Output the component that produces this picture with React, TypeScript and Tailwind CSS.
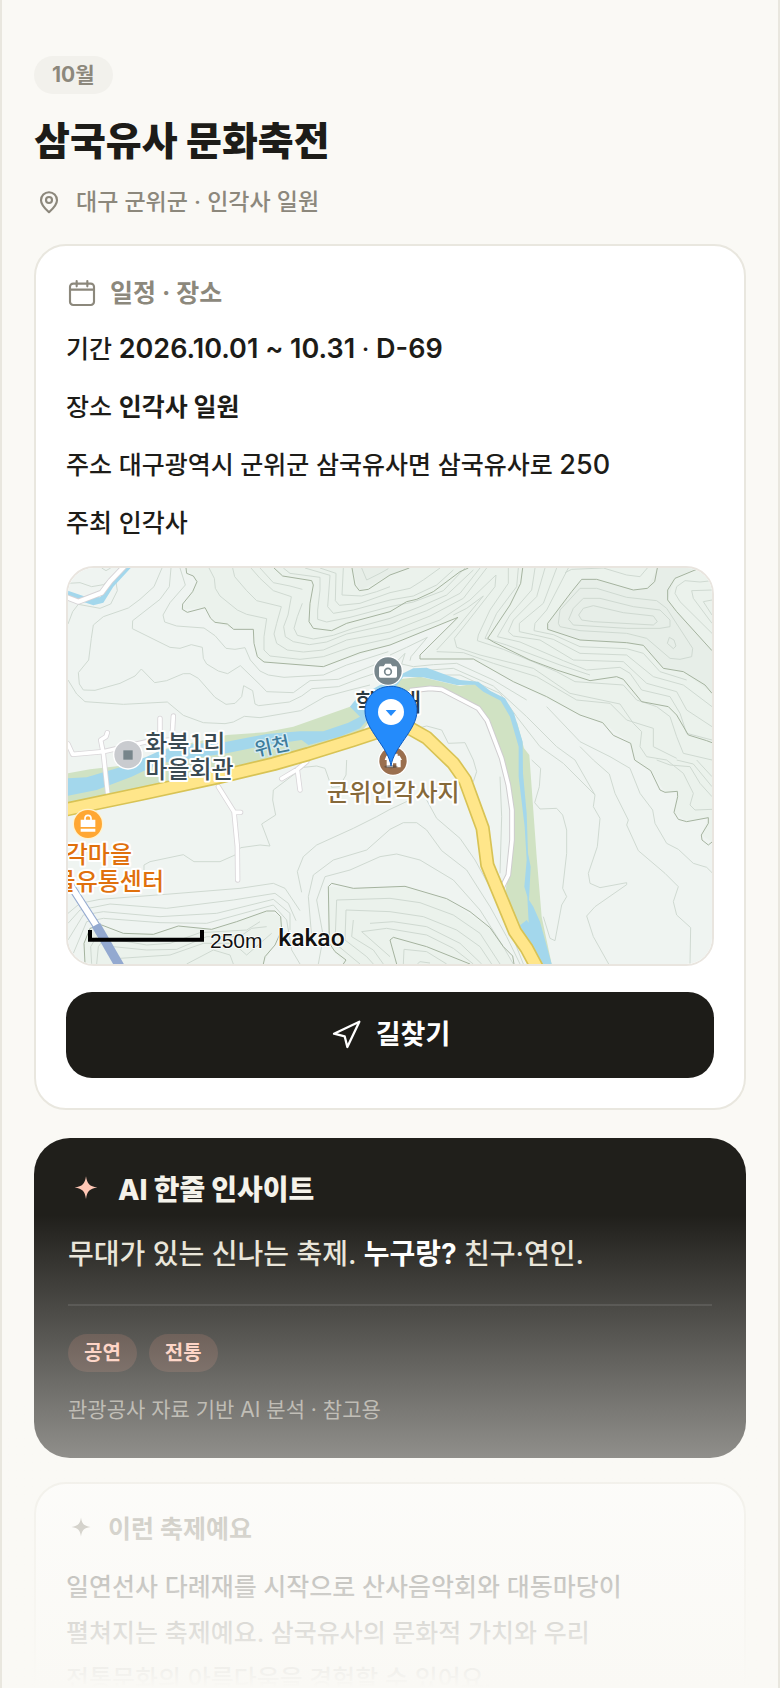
import type { ReactNode } from 'react'

const MAP_FONT = "font-['Noto_Sans_CJK_KR',sans-serif]"

const infoRows: { label: string; value: ReactNode }[] = [
  {
    label: '기간',
    value: (
      <>
        <b className="text-[27px] font-semibold">2026.10.01 ~ 10.31</b> · <b className="text-[27px] font-semibold">D-69</b>
      </>
    ),
  },
  { label: '장소', value: <b className="font-bold">인각사 일원</b> },
  {
    label: '주소',
    value: (
      <>
        대구광역시 군위군 삼국유사면 삼국유사로 <span className="text-[27px]">250</span>
      </>
    ),
  },
  { label: '주최', value: '인각사' },
]

const tags = ['공연', '전통']

// thin contour lines of the map
const contours = [
  'M24 70 L60 68 L95 80 L130 74 L160 50 L178 24',
  'M125 24 L138 32 L152 24',
  'M24 192 L38 155 L55 133 L120 145 L152 132 L172 92 L168 66',
  'M306 24 L282 80 L240 118 L205 144 L130 170 L100 195 L94 235 L86 300 L55 338 L58 372 L70 390 L105 391 L180 370 L225 348 L244 327 L284 368 L320 362 L370 341 L390 341 L415 355 L465 412 L498 433 L525 430 L545 410 L551 377 L578 392 L585 432 L596 437 L688 426 L725 408 L755 386 L835 380 L900 355 L960 335',
  'M24 360 L50 402 L75 425 L190 433 L322 426 L370 466 L430 488 L495 491 L520 486 L553 469 L600 473 L722 452 L795 410 L870 390 L930 375',
  'M333 24 L328 80 L300 118 L218 182 L217 206 L330 262 L360 265 L394 254 L427 262 L430 295 L440 312 L475 333 L503 341 L541 317 L570 345 L602 376 L620 395 L700 398 L750 362 L835 358 L985 298',
  'M360 24 L376 75 L330 128 L309 165 L314 186 L350 198 L432 204 L465 227 L498 265 L525 268 L555 263 L571 300 L600 333 L625 345 L672 352 L790 345 L860 315 L985 275',
  'M447 24 L463 55 L466 85 L480 108 L532 150 L560 163 L620 176 L612 230 L612 270 L630 288 L720 298 L790 290 L870 262 L990 235',
  'M518 24 L524 50 L560 92 L590 122 L664 140 L650 190 L642 222 L650 250 L682 270 L730 276 L790 270 L860 240 L990 216',
  'M573 24 L600 55 L640 92 L694 110 L684 165 L671 200 L676 230 L700 245 L748 254 L800 246 L860 222 L990 193',
  'M600 24 L640 68 L690 78 L727 88',
  'M727 130 L712 170 L702 205 L712 226 L760 237 L820 226 L880 205 L990 175',
  'M670 24 L690 40 L780 52 L780 90 L773 150 L773 178 L800 186 L870 172 L990 140',
  'M735 24 L810 46 L803 140 L820 160 L880 150 L990 120',
  'M780 24 L828 40 L826 122 L838 136 L900 130 L990 98',
  'M850 24 L846 105 L905 108 L950 95 L990 80',
  'M905 24 L920 60 L960 40 L985 26',
  'M990 98 L1050 85 L1090 60 L1140 24',
  'M990 120 L1060 108 L1130 75 L1180 30',
  'M990 140 L1060 126 L1150 92 L1215 24',
  'M990 175 L1080 140 L1160 105 L1240 30',
  'M990 193 L1100 152 L1200 100 L1260 24',
  'M990 216 L1110 168 L1210 115 L1280 24',
  'M990 235 L1140 180 L1230 120 L1308 45 L1305 80 L1215 195 L1183 235 L1190 262 L1260 285 L1420 325 L1530 400 L1680 432 L1720 490 L1745 515 L1740 560 L1760 590 L1820 600 L1870 640 L1900 700 L1890 735 L1905 750 L1956 748',
  'M1050 302 L1053 290 L1102 232 L1040 262 L990 285',
  'M1005 310 L1035 280 L1025 312 L1060 320 L1120 314 L1190 310 L1300 360 L1400 420',
  'M1130 270 L1190 205 L1270 108 L1220 145 L1180 165',
  'M1130 275 L1210 278 L1300 310 L1430 350 L1550 420 L1650 430 L1700 480 L1780 505 L1780 560 L1850 595',
  'M1345 24 L1345 70 L1290 150 L1255 225 L1252 242 L1330 268 L1490 335 L1545 365 L1690 375 L1730 420 L1790 440 L1830 470 L1850 530 L1870 580 L1956 600',
  'M1375 24 L1370 80 L1310 160 L1275 235 L1340 255 L1500 315 L1590 345',
  'M1425 24 L1415 90 L1350 165 L1312 230 L1380 246 L1510 302 L1580 330 L1680 322 L1710 340 L1745 390 L1830 410 L1860 460 L1880 520 L1956 540',
  'M1455 24 L1430 110 L1360 180 L1345 215 L1360 228 L1440 240 L1540 300 L1690 305 L1760 370 L1850 395 L1880 450 L1956 500',
  'M1490 24 L1450 130 L1378 190 L1378 215 L1420 224 L1480 238 L1560 280 L1700 285 L1780 350 L1870 375 L1956 440',
  'M1525 24 L1460 150 L1425 190 L1422 212 L1480 224 L1560 260 L1700 266 L1750 280 L1800 335 L1880 360',
  'M1515 38 L1535 28 L1630 24 L1700 45 L1740 50 L1762 24',
  'M1495 190 L1500 150 L1560 85 L1610 85 L1700 112 L1790 122 L1820 145 L1898 265 L1895 290 L1860 298 L1830 295 L1760 235 L1700 220 L1560 212 L1500 200Z',
  'M1526 178 L1540 145 L1570 115 L1620 115 L1720 140 L1800 150 L1830 180 L1830 200 L1800 205 L1700 205 L1540 195Z',
  'M1556 165 L1570 145 L1600 137 L1690 158 L1780 168 L1792 185 L1780 195 L1600 185 L1565 180Z',
  'M1822 250 L1828 232 L1842 240 L1848 258 L1840 266Z',
  'M1956 62 L1920 66 L1875 62 L1850 80 L1845 100 L1860 125 L1956 220',
  'M1956 90 L1895 92 L1900 115 L1956 190',
  'M1956 120 L1930 125 L1956 165',
  'M1110 330 L1180 325 L1300 378 L1400 470 L1490 560 L1545 600 L1605 705 L1600 740 L1620 775 L1612 860 L1585 940 L1590 970 L1620 983 L1700 968 L1700 974 L1605 1040 L1580 1068 L1600 1130 L1646 1212',
  'M1120 345 L1200 345 L1320 400 L1370 470 L1440 560 L1510 610 L1560 660 L1605 705',
  'M1560 560 L1600 600 L1648 642 L1665 700 L1705 780 L1700 795 L1735 872 L1815 940 L1855 980 L1840 1025 L1850 1065 L1892 1103 L1890 1212',
  'M1460 440 L1560 545 L1650 590 L1710 625 L1740 700 L1778 750 L1785 790 L1820 850 L1855 868 L1900 910 L1940 922 L1956 938',
  'M1415 600 L1442 625 L1438 680 L1424 728 L1440 747 L1490 745 L1508 765 L1520 810 L1520 880 L1508 985 L1520 1010 L1505 1035 L1485 1142 L1470 1135 L1450 1070',
  'M1050 510 L1100 498 L1145 510 L1165 550 L1215 548 L1240 600 L1250 635 L1240 665',
  'M1320 650 L1325 770 L1320 940',
  'M860 600 L858 645 L838 680 L815 682 L795 625 L770 618 L730 622 L640 690 L638 720 L647 765 L605 792 L630 858 L600 855 L542 863 L525 885 L480 905 L402 905 L370 884 L270 905 L252 915 L252 930',
  'M1100 720 L1130 775 L1200 835 L1245 900 L1300 1000 L1350 1110 L1390 1212',
  'M725 997 L712 935 L730 890 L770 855 L880 805 L950 770 L990 748 L1050 720',
  'M755 1130 L745 1010 L760 945 L820 900 L920 870 L990 808 L1030 788 L1070 788 L1100 810 L1145 872 L1220 930 L1290 1040 L1340 1130 L1380 1212',
  'M775 1212 L790 1130 L770 1020 L795 950 L870 930 L960 890 L1010 882 L1080 900 L1180 960 L1260 1050 L1330 1160 L1360 1212',
  'M24 1060 L60 1030 L120 1018 L330 1002 L540 985 L640 970 L675 985 L720 1052',
  'M24 1090 L60 1050 L150 1032 L320 1045 L520 1020 L645 1000 L685 1030 L708 1082',
  'M24 1140 L70 1065 L130 1055 L300 1070 L470 1060 L640 1018 L690 1060 L690 1110',
  'M40 1180 L80 1085 L130 1075 L300 1088 L440 1090 L640 1035 L680 1080 L695 1170 L720 1212',
  'M145 1135 L260 1155 L330 1150 L420 1118 L560 1110 L600 1085',
  'M160 1160 L260 1170 L350 1168 L440 1130 L540 1130 L575 1105 L620 1100',
  'M180 1195 L330 1185 L430 1150 L520 1150 L560 1185 L600 1150 L635 1120',
  'M380 1212 L460 1170 L510 1185 L520 1212',
  'M95 1212 L92 1160 L110 1130 M110 1212 L115 1160 L130 1140',
  'M830 1020 L825 1150 L900 1212 M830 1020 L990 1015 L1080 1028 L1180 1065 L1260 1120 L1320 1212',
  'M858 1050 L855 1140 L920 1190 L940 1212 M858 1050 L990 1055 L1090 1070 L1190 1110 L1260 1160 L1295 1212',
  'M880 1080 L875 1130 L940 1170 L970 1212 M930 1090 L1000 1085 L1100 1100 L1200 1150 L1265 1212',
  'M905 1115 L990 1190 M905 1115 L980 1105 L1100 1125 L1180 1165 L1240 1212',
  'M1030 1212 L1032 1168 L1100 1175 L1160 1212 M1072 1212 L1080 1205 L1110 1209',
  'M1790 600 L1830 615 L1890 620 L1920 670 L1956 710 M1850 600 L1900 612 L1956 680 M1910 600 L1956 650',
]

const indexContours = [
  'M378 24 L380 40 L400 48 L411 65 L398 95 L368 132 L367 148 L382 157 L435 143 L452 175 L465 187 L502 192 L521 208 L580 208 L582 250 L592 290 L612 306 L790 320 L900 278 L990 255 L1194 172 L1080 285 L1080 297 L1240 297 L1360 365 L1460 410 L1560 465 L1628 488 L1660 526 L1712 550 L1724 600 L1772 632 L1800 690 L1815 697 L1852 694 L1853 710 L1842 757 L1855 778 L1880 785 L1945 773 L1945 790 L1924 825 L1926 840 L1945 855 L1956 846',
  'M642 24 L668 48 L755 62 L760 75 L750 130 L747 185 L760 205 L815 212 L860 190 L990 155 L1040 125 L1070 118 L1120 95 L1200 35 L1225 24',
  'M876 24 L885 75 L898 92 L925 88 L990 45 L1048 24',
  'M1388 24 L1382 70 L1350 135 L1283 235 L1300 246 L1410 300 L1490 330 L1590 362 L1670 350 L1690 358 L1745 425 L1825 440 L1850 465 L1885 525 L1940 542 L1956 548',
  'M1792 24 L1784 65 L1762 85 L1720 90 L1610 58 L1565 58 L1535 95 L1463 190 L1463 208 L1560 240 L1700 248 L1750 256 L1810 325 L1870 335 L1935 375 L1956 400',
  'M1910 28 L1845 55 L1823 90 L1823 120 L1850 155 L1956 272',
  'M75 1212 L72 1150 L90 1105 L125 1095 L190 1120 L280 1123 L355 1098 L455 1108 L530 1085 L620 1053 L645 1053 L662 1070 L665 1110 L645 1155 L615 1190 L610 1212',
  'M850 1212 L858 1200 L825 1175 L808 1150 L805 980 L815 970 L880 985 L1035 979 L1160 1016 L1230 1055 L1290 1103 L1330 1160 L1358 1188 L1362 1212',
  'M1010 1212 L990 1140 L1000 1132 L1100 1160 L1230 1212',
]

const smallRoads = [
  'M24 552 L38 583 L130 575 L260 545 L330 540',
  'M143 700 L130 580 L122 540 L138 530 L142 518',
  'M300 475 L300 540 M340 468 L337 520',
  'M475 680 L522 755 L532 860 L533 960 M522 757 L542 757',
  'M740 605 L712 628 L665 656 M712 628 L720 690',
]

const riverBanks =
  'M24 640 L90 628 L250 610 L300 570 L500 525 L615 517 L700 500 L870 440 L1000 360 L1080 350 L1200 378 L1252 370 L1320 412 L1372 490 L1392 565 L1408 585 L1430 890 L1445 1070 L1475 1212 L1400 1180 L1335 1000 L1360 860 L1345 670 L1320 590 L1290 490 L1255 445 L1140 387 L1000 400 L900 520 L500 640 L24 735Z'

const river =
  'M24 655 L80 652 L180 622 L260 590 L300 572 L400 552 L500 545 L620 522 L720 514 L790 514 L865 488 L900 470 L870 440 L890 415 L960 375 L1030 340 L1060 325 L1100 323 L1200 360 L1255 365 L1290 392 L1335 415 L1362 460 L1388 545 L1389 640 L1400 760 L1404 880 L1412 920 L1407 1020 L1420 1040 L1440 1085 L1475 1212 L1430 1212 L1375 1100 L1400 1080 L1406 1088 L1402 1010 L1393 980 L1400 900 L1394 800 L1376 650 L1376 560 L1350 470 L1322 422 L1270 395 L1245 374 L1190 375 L1090 352 L1030 350 L985 410 L950 450 L900 505 L840 530 L745 555 L725 540 L620 555 L500 580 L300 610 L215 650 L110 690 L24 707Z'

const sideRoad =
  'M1050 392 L1110 385 L1145 388 L1255 445 L1282 482 L1325 595 L1345 675 L1356 750 L1356 840 L1345 945 L1325 985'

const mainRoad =
  'M10 750 L240 702 L480 650 L640 612 L745 582 L880 540 L1000 500 L1050 505 L1100 533 L1180 610 L1215 660 L1268 805 L1282 915 L1365 1115 L1400 1165 L1432 1225'

function FestivalMap() {
  return (
    <svg
      viewBox="24 24 1932 1188"
      preserveAspectRatio="xMidYMid slice"
      role="img"
      aria-label="인각사 일원 지도"
      className="block h-[396px] w-full"
      fill="none"
      strokeLinejoin="round"
    >
      <rect x="24" y="24" width="1932" height="1188" fill="#eff4f1" />
      {/* higher ground */}
      <path d="M378 24 L411 65 L367 148 L435 143 L465 187 L521 208 L580 208 L592 290 L612 306 L790 320 L990 255 L1194 172 L1080 297 L1240 297 L1360 365 L1560 465 L1628 488 L1712 550 L1724 600 L1772 632 L1815 697 L1852 694 L1842 757 L1880 785 L1945 773 L1924 825 L1956 846 L1956 24Z" fill="#ebf2ec" />
      <path d="M75 1212 L72 1150 L90 1105 L190 1120 L280 1123 L355 1098 L455 1108 L620 1053 L662 1070 L665 1110 L610 1212Z M850 1212 L808 1150 L805 980 L880 985 L1035 979 L1160 1016 L1290 1103 L1362 1212Z" fill="#ebf2ec" />
      <path d="M1792 24 L1762 85 L1720 90 L1610 58 L1565 58 L1463 190 L1463 208 L1560 240 L1750 256 L1810 325 L1870 335 L1956 400 L1956 272 L1823 120 L1845 55 L1910 24Z M876 24 L898 92 L990 45 L1048 24Z" fill="#e7eee8" />
      <g stroke="#cfd9d1" strokeWidth="3">
        {contours.map(d => (
          <path key={d} d={d} />
        ))}
      </g>
      <g stroke="#a5b39f" strokeWidth="3">
        {indexContours.map(d => (
          <path key={d} d={d} />
        ))}
      </g>

      <path d={riverBanks} fill="#d0e2c3" />
      <path d={river} fill="#a3d7ec" />
      <path d="M24 92 L70 108 L120 112 L150 75 L195 24 L212 24 L160 80 L130 128 L100 136 L24 110Z" fill="#a3d7ec" />
      <path d="M10 108 L55 125 L125 98 L152 62 L198 14" stroke="#d6d3d6" strokeWidth="18" />
      <path d="M10 108 L55 125 L125 98 L152 62 L198 14" stroke="#fff" strokeWidth="13" />

      <g strokeLinecap="round">
        {smallRoads.map(d => (
          <path key={d} d={d} stroke="#d9d6d9" strokeWidth="16" />
        ))}
        {smallRoads.map(d => (
          <path key={d} d={d} stroke="#fff" strokeWidth="11" />
        ))}
      </g>
      <path d={sideRoad} stroke="#cfcdcf" strokeWidth="17" />
      <path d={sideRoad} stroke="#fff" strokeWidth="11" />
      <path d={mainRoad} stroke="#d8c355" strokeWidth="43" />
      <path d={mainRoad} stroke="#ffe68a" strokeWidth="33" />

      {/* expressway coming out of the tunnel */}
      <path d="M24 965 L108 1095" stroke="#93a9d0" strokeWidth="24" />
      <path d="M20 958 L108 1095" stroke="#fff" strokeWidth="18" />
      <path d="M108 1095 L180 1220" stroke="#93a9d0" strokeWidth="28" />

      <g className={`${MAP_FONT} font-medium`} fontSize="72" stroke="#fff" strokeWidth="12" style={{ paintOrder: 'stroke' }}>
        <text x="256" y="577" fill="#3a4a52">화북1리</text>
        <text x="256" y="655" fill="#3a4a52">마을회관</text>
        <text x="216" y="910" fill="#e0700c" textAnchor="end">인각마을</text>
        <text x="312" y="990" fill="#e0700c" textAnchor="end">농산물유통센터</text>
        <text x="1000" y="724" fill="#86693a" textAnchor="middle">군위인각사지</text>
        <text x="985" y="453" fill="#2c3a42" textAnchor="middle">학소대</text>
        <text x="588" y="590" fontSize="58" strokeWidth="8" stroke="#d6ecf3" fill="#3f7c9b" transform="rotate(-12 588 590)">위천</text>
      </g>

      {/* village hall */}
      <circle cx="204" cy="584" r="45" fill="#fff" />
      <circle cx="204" cy="584" r="41" fill="#c9cbcf" />
      <rect x="190" y="571" width="28" height="28" fill="#77858b" />
      {/* market */}
      <circle cx="84" cy="792" r="46" fill="#fff3cf" />
      <circle cx="84" cy="792" r="42" fill="#ffa733" />
      <path d="M62 779 h44 v22 h-44Z M62 806 h44 v9 h-44Z" fill="#fff" />
      <path d="M75 781 v-6 a9 9 0 0 1 18 0 v6" stroke="#fff" strokeWidth="5" />
      {/* viewpoint */}
      <circle cx="984" cy="333" r="45" fill="#fff" />
      <circle cx="984" cy="333" r="41" fill="#77868c" />
      <path d="M961 319 h10 l5 -8 h16 l5 8 h10 q4 0 4 4 v26 q0 4 -4 4 h-46 q-4 0 -4 -4 v-26 q0 -4 4 -4Z" fill="#fff" />
      <circle cx="984" cy="335" r="10" stroke="#77868c" strokeWidth="5" />
      {/* temple site */}
      <circle cx="999" cy="603" r="45" fill="#fff" />
      <circle cx="999" cy="603" r="41" fill="#9a6f4e" />
      <path d="M974 600 l5 -13 h6 v-6 h28 v6 h6 l7 13 h-4 v22 h-13 v-12 h-10 v12 h-19 v-22Z" fill="#fff" />
      <ellipse cx="993" cy="620" rx="20" ry="5" fill="#333" fillOpacity="0.45" />
      {/* pin */}
      <path d="M993 618 C985 560 915 510 915 452 C915 412 948 379 993 379 C1038 379 1071 412 1071 452 C1071 510 1001 560 993 618Z" fill="#248bfb" stroke="#0f5cc0" strokeWidth="3" />
      <circle cx="993" cy="456" r="39" fill="#fff" />
      <path d="M977 450 h32 l-16 18Z" fill="#248bfb" />

      {/* scale bar */}
      <path d="M90 1110 V1139 H426 V1110" stroke="#000" strokeWidth="12" strokeLinejoin="miter" />
      <text x="450" y="1164" fontSize="63" fill="#111" stroke="#fff" strokeWidth="5" style={{ paintOrder: 'stroke' }} className="font-['Liberation_Sans',sans-serif]">250m</text>
      <text x="655" y="1157" fontSize="74" fill="#111" stroke="#fff" strokeWidth="6" style={{ paintOrder: 'stroke' }} className="font-['Roboto',sans-serif] font-medium">kakao</text>
    </svg>
  )
}

function Sparkle({ className }: { className: string }) {
  return (
    <svg viewBox="0 0 24 24" className={className} fill="currentColor" aria-hidden="true">
      <path d="M12 2.8 C12.8 7.9 14.2 9.5 19.6 10.4 C14.2 11.3 12.8 12.9 12 18 C11.2 12.9 9.8 11.3 4.4 10.4 C9.8 9.5 11.2 7.9 12 2.8Z" />
    </svg>
  )
}

export default function App() {
  return (
    <main className="relative h-screen overflow-hidden border-x-2 border-[#e9e7df] bg-[#faf9f5] px-8 pt-14 font-['Inter','Noto_Sans_CJK_KR',sans-serif] text-[25px] text-[#1d1c18]">
      <header>
        <span className="inline-flex h-[38px] items-center rounded-full bg-[#f2f1ec] px-[18px] align-top text-[21px] font-bold text-[#8c887c]">
          10월
        </span>
        <h1 className="mt-[22px] text-[39px] leading-[50px] font-extrabold">삼국유사 문화축전</h1>
        <p className="mt-[18px] flex items-center gap-3 text-[23px] leading-9 font-medium text-[#8c887c]">
          <svg viewBox="0 0 24 24" className="size-[30px]" fill="none" stroke="currentColor" strokeWidth="1.7" strokeLinejoin="round" aria-hidden="true">
            <path d="M12 20.2 C9.2 17.6 5.6 14.6 5.6 10.6 A6.4 6.4 0 0 1 18.4 10.6 C18.4 14.6 14.8 17.6 12 20.2Z" />
            <circle cx="12" cy="10.4" r="2.4" />
          </svg>
          대구 군위군 · 인각사 일원
        </p>
      </header>

      <section className="mt-6 rounded-[32px] border-2 border-[#e9e7df] bg-white p-[30px]">
        <h2 className="flex items-center gap-3 leading-[34px] font-bold text-[#8c887c]">
          <svg viewBox="0 0 24 24" className="size-8" fill="none" stroke="currentColor" strokeWidth="1.6" strokeLinecap="round" aria-hidden="true">
            <rect x="3" y="5" width="18" height="16" rx="2.4" />
            <path d="M3 9.5h18M8 3v4M16 3v4" />
          </svg>
          일정 · 장소
        </h2>
        <div className="mt-4 flex flex-col gap-3 leading-[46px] font-medium">
          {infoRows.map(row => (
            <p key={row.label}>
              {row.label} {row.value}
            </p>
          ))}
        </div>
        <div className="mt-5 overflow-hidden rounded-[28px] border-2 border-[#e9e5df]">
          <FestivalMap />
        </div>
        <button type="button" className="mt-[26px] flex h-[86px] w-full items-center justify-center gap-[14px] rounded-[26px] bg-[#1d1c18] text-[27px] font-bold text-white">
          <svg viewBox="0 0 24 24" className="size-8" fill="none" stroke="currentColor" strokeWidth="1.7" strokeLinejoin="round" aria-hidden="true">
            <path d="M3 11 22 2 13 21 11 13Z" />
          </svg>
          길찾기
        </button>
      </section>

      <section className="mt-7 rounded-[36px] bg-[#201f1b] p-[34px]">
        <h2 className="flex items-center gap-[14px] text-[28px] leading-9 font-extrabold text-[#f4f2ea]">
          <Sparkle className="size-9 text-[#ffc7b5]" />
          AI 한줄 인사이트
        </h2>
        <p className="mt-6 text-[28px] leading-[44px] font-medium text-[#e8e4d8]">
          무대가 있는 신나는 축제. <b className="font-bold text-white">누구랑?</b> 친구·연인.
        </p>
        <ul className="mt-7 flex gap-3 border-t-2 border-white/10 pt-7">
          {tags.map(tag => (
            <li key={tag} className="flex h-[38px] items-center rounded-full bg-[#ff8a70]/15 px-4 text-[20px] font-bold text-[#ffc7b5]">
              {tag}
            </li>
          ))}
        </ul>
        <p className="mt-6 text-[21px] leading-7 text-[#98948a]">관광공사 자료 기반 AI 분석 · 참고용</p>
      </section>

      <section className="mt-6 rounded-[32px] border-2 border-[#e9e7df] bg-white p-[30px]">
        <h2 className="flex items-center gap-3 leading-[30px] font-bold text-[#8c887c]">
          <Sparkle className="size-[30px]" />
          이런 축제예요
        </h2>
        <p className="mt-5 leading-[46px] font-medium">
          일연선사 다례재를 시작으로 산사음악회와 대동마당이
          <br />
          펼쳐지는 축제예요. 삼국유사의 문화적 가치와 우리
          <br />
          전통문화의 아름다움을 경험할 수 있어요.
        </p>
      </section>

      {/* fades the page out towards the bottom edge */}
      <div className="pointer-events-none absolute -inset-x-[2px] bottom-0 h-[28vh] bg-linear-to-b from-[#faf9f5]/0 to-[#faf9f5]" />
    </main>
  )
}
